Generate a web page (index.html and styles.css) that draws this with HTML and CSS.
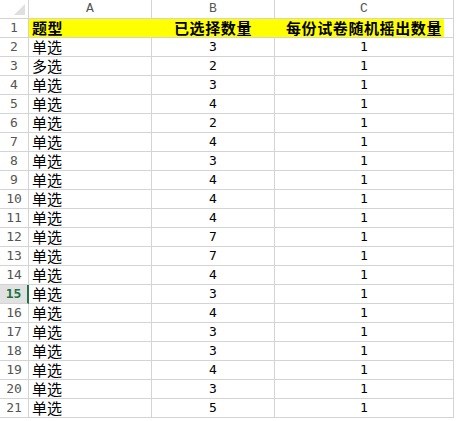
FILE: index.html
```html
<!DOCTYPE html>
<html>
<head>
<meta charset="utf-8">
<link rel="stylesheet" href="styles.css">
</head>
<body>
<div class="sheet">
  <div class="corner"><span class="tri"></span></div>
  <div class="colhead">A</div>
  <div class="colhead">B</div>
  <div class="colhead">C</div>

  <div class="rowhead">1</div>
  <div class="cell hl txt bold">题型</div>
  <div class="cell hl center txt bold">已选择数量</div>
  <div class="cell hlpart center txt bold">每份试卷随机摇出数量</div>

  <div class="rowhead">2</div><div class="cell txt">单选</div><div class="cell num">3</div><div class="cell num">1</div>
  <div class="rowhead">3</div><div class="cell txt">多选</div><div class="cell num">2</div><div class="cell num">1</div>
  <div class="rowhead">4</div><div class="cell txt">单选</div><div class="cell num">3</div><div class="cell num">1</div>
  <div class="rowhead">5</div><div class="cell txt">单选</div><div class="cell num">4</div><div class="cell num">1</div>
  <div class="rowhead">6</div><div class="cell txt">单选</div><div class="cell num">2</div><div class="cell num">1</div>
  <div class="rowhead">7</div><div class="cell txt">单选</div><div class="cell num">4</div><div class="cell num">1</div>
  <div class="rowhead">8</div><div class="cell txt">单选</div><div class="cell num">3</div><div class="cell num">1</div>
  <div class="rowhead">9</div><div class="cell txt">单选</div><div class="cell num">4</div><div class="cell num">1</div>
  <div class="rowhead">10</div><div class="cell txt">单选</div><div class="cell num">4</div><div class="cell num">1</div>
  <div class="rowhead">11</div><div class="cell txt">单选</div><div class="cell num">4</div><div class="cell num">1</div>
  <div class="rowhead">12</div><div class="cell txt">单选</div><div class="cell num">7</div><div class="cell num">1</div>
  <div class="rowhead">13</div><div class="cell txt">单选</div><div class="cell num">7</div><div class="cell num">1</div>
  <div class="rowhead">14</div><div class="cell txt">单选</div><div class="cell num">4</div><div class="cell num">1</div>
  <div class="rowhead sel">15</div><div class="cell txt">单选</div><div class="cell num">3</div><div class="cell num">1</div>
  <div class="rowhead">16</div><div class="cell txt">单选</div><div class="cell num">4</div><div class="cell num">1</div>
  <div class="rowhead">17</div><div class="cell txt">单选</div><div class="cell num">3</div><div class="cell num">1</div>
  <div class="rowhead">18</div><div class="cell txt">单选</div><div class="cell num">3</div><div class="cell num">1</div>
  <div class="rowhead">19</div><div class="cell txt">单选</div><div class="cell num">4</div><div class="cell num">1</div>
  <div class="rowhead">20</div><div class="cell txt">单选</div><div class="cell num">3</div><div class="cell num">1</div>
  <div class="rowhead">21</div><div class="cell txt">单选</div><div class="cell num">5</div><div class="cell num">1</div>
</div>
</body>
</html>
```
FILE: styles.css
```css
html, body {
  margin: 0;
  padding: 0;
  background: #ffffff;
  width: 458px;
  height: 421px;
  overflow: hidden;
}

.sheet {
  display: grid;
  grid-template-columns: 29px 123px 123px 179px;
  grid-auto-rows: 19px;
}

.corner, .colhead, .rowhead, .cell {
  box-sizing: border-box;
  border-right: 1px solid #d4d4d4;
  border-bottom: 1px solid #d4d4d4;
}

.corner {
  position: relative;
  background: #ffffff;
}

.corner .tri {
  position: absolute;
  right: 3px;
  bottom: 3px;
  width: 0;
  height: 0;
  border-left: 11px solid transparent;
  border-bottom: 11px solid #dfdfdf;
}

.colhead {
  display: flex;
  align-items: center;
  justify-content: center;
  font-family: "Liberation Mono", "DejaVu Sans Mono", monospace;
  font-size: 13px;
  line-height: 18px;
  color: #555555;
}

.rowhead {
  display: flex;
  align-items: center;
  justify-content: center;
  font-family: "DejaVu Sans Mono", monospace;
  font-size: 13px;
  line-height: 18px;
  color: #555555;
}

.rowhead.sel {
  background: #e1e1e1;
  color: #217346;
  font-weight: bold;
  border-right: 2px solid #217346;
}

.cell {
  display: flex;
  align-items: center;
  padding: 0 0 0 3px;
  color: #000000;
  white-space: nowrap;
}

.txt {
  font-family: "Noto Sans CJK SC", "Noto Sans", sans-serif;
  font-size: 15px;
  line-height: 18px;
}

.bold {
  font-weight: bold;
  letter-spacing: 0.6px;
}

.num {
  justify-content: center;
  font-family: "DejaVu Sans Mono", monospace;
  font-size: 13px;
  line-height: 18px;
  padding-left: 0;
}

.center {
  justify-content: center;
  padding-left: 0;
}

.hl {
  background: #ffff00;
  border-right-color: #ffff00;
}

.hlpart {
  background: linear-gradient(to right, #ffff00 169px, #ffffff 169px);
}
```
